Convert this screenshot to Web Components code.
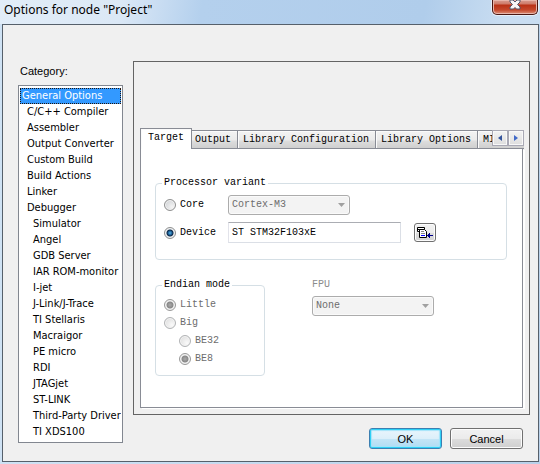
<!DOCTYPE html>
<html lang="en">
<head>
<meta charset="utf-8">
<title>Options for node "Project"</title>
<style>
html, body { margin: 0; min-height: 100vh; }
body { background: #bcd6ee; font: 11px/16px "DejaVu Sans Condensed", "DejaVu Sans", sans-serif; color: #000; }
</style>
</head>
<body>
<options-dialog></options-dialog>
<script>
const define = (name, html, setup) => customElements.define(name, class extends HTMLElement {
  connectedCallback() {
    if (this.shadowRoot) return;
    const t = document.createElement('template');
    t.innerHTML = '<style>*{box-sizing:border-box}</style>' + html;
    this.attachShadow({ mode: 'open' }).append(t.content.cloneNode(true));
    if (setup) setup(this, this.shadowRoot);
  }
});

define('title-bar', `
<style>
:host { display: flex; justify-content: space-between; align-items: flex-start; height: 24px; padding: 0 2px 0 4px; background: linear-gradient(100deg, #e2edf8 0, #dbe8f6 120px, #b4d0ed 200px, #b0cdeb 420px, #c9ddf1 500px); }
h1 { margin: 0; font: 12px/20px "Noto Sans", "Open Sans", sans-serif; }
button { width: 46px; height: 15px; padding: 0; border: 1px solid #4a1712; border-top: 0; border-radius: 0 0 5px 5px; background: linear-gradient(#d99d91 0, #cf7a68 4px, #b93116 5px, #c5482c 10px, #dc9179 14px); box-shadow: inset 0 0 0 1px #e8b5aa, 0 0 0 1px #e7eff8; display: grid; justify-items: center; align-items: start; }
svg { display: block; }
</style>
<h1><slot></slot></h1>
<button aria-label="Close"><svg width="12" height="10" viewBox="0 0 12 10"><path d="M1 0h3l2 2 2-2h3v2L8.500 4.500 11 7v2H7.500L6 7.500 4.500 9H1V7l2.500-2.500L1 2z" fill="#f7f7f7" stroke="#50566b"/></svg></button>`);

define('category-list', `
<style>
:host { display: block; }
ul { margin: 0; padding: 2px 1px; border: 1px solid #828790; background: #fff; list-style: none; }
</style>
<ul role="listbox" aria-label="Category"><slot></slot></ul>`);

define('category-item', `
<style>
:host { display: block; height: 16px; padding-left: 7px; line-height: 16px; white-space: nowrap; overflow: hidden; }
:host([level="0"]) { padding-left: 2px; }
:host([level="2"]) { padding-left: 13px; }
:host([selected]) { background: #3399ff; color: #fff; outline: 1px dotted #23140a; outline-offset: -1px; }
</style>
<slot></slot>`, host => { host.setAttribute('role', 'option'); host.setAttribute('aria-selected', host.hasAttribute('selected')); });

define('tab-strip', `
<style>
:host { display: flex; align-items: flex-end; height: 21px; position: relative; overflow: hidden; }
nav { position: absolute; right: 0; top: 2px; display: flex; background: #f0f0f0; }
nav button { width: 16px; height: 16px; padding: 0; border: 1px solid #a9a9b5; background: linear-gradient(#f3f3f3, #dedede); box-shadow: inset 0 0 0 1px #f8f8f8; display: grid; place-items: center; }
</style>
<slot></slot>
<nav>
<button aria-label="Scroll tabs left"><svg width="4" height="6"><path d="M4 0v6L0 3z" fill="#34549c"/></svg></button>
<button aria-label="Scroll tabs right"><svg width="4" height="6"><path d="M0 0v6l4-3z" fill="#4169c8"/></svg></button>
</nav>`);

define('tab-item', `
<style>
:host { display: block; flex: none; }
:host([active]) { margin-right: -2px; position: relative; z-index: 1; }
button { display: block; height: 19px; padding: 1px 6px 0 5px; border: 1px solid #898c95; border-left-width: 0; background: linear-gradient(#f3f3f3, #ebebeb 9px, #dddddd 10px, #cfcfcf); box-shadow: inset 1px 1px #fbfbfb; font: 10px/16px "Liberation Mono", monospace; color: #000; white-space: nowrap; }
:host([active]) button { height: 21px; padding: 0 7px 2px; border-left-width: 1px; border-bottom: 0; background: #fff; }
</style>
<button role="tab"><slot></slot></button>`, (h, r) => r.querySelector('button').setAttribute('aria-selected', h.hasAttribute('active')));

define('group-box', `
<style>
:host { display: block; }
fieldset { margin: 0; min-width: 0; border: 1px solid #d5dfe5; border-radius: 4px; padding: 5px 8px 8px; height: 100%; }
legend { padding: 0 2px; margin-left: -2px; line-height: 12px; }
</style>
<fieldset><legend></legend><slot></slot></fieldset>`, (h, r) => r.querySelector('legend').textContent = h.getAttribute('label'));

define('radio-option', `
<style>
:host { display: block; }
label { display: flex; align-items: center; gap: 4px; height: 18px; }
input { appearance: none; flex: none; margin: 0; width: 12px; height: 12px; border: 1px solid #8e8f8f; border-radius: 50%; background: radial-gradient(circle at 70% 70%, #f4f4f4, #c9ccd0); box-shadow: inset 0 0 0 1px #f4f4f4; }
input:checked { background: radial-gradient(circle, #59b8e8 0, #1a5a91 2px, #0b2644 3px, #e4e8ec 4px); }
input:disabled { border-color: #b1b3b5; background: radial-gradient(circle at 70% 70%, #fafafa, #d8d8d8); }
input:disabled:checked { border-color: #999; background: radial-gradient(circle, #aaa 0, #888 3px, #eee 4px); }
:host([disabled]) { color: #6d6d6d; }
</style>
<label><input type="radio"><span><slot></slot></span></label>`, (h, r) => {
  const i = r.querySelector('input');
  i.checked = h.hasAttribute('checked');
  i.disabled = h.hasAttribute('disabled');
});

define('combo-box', `
<style>
:host { display: grid; width: 122px; }
select { grid-area: 1 / 1; appearance: none; width: 100%; height: 20px; margin: 0; padding: 0 20px 0 3px; border: 1px solid #acacac; border-radius: 3px; background: #f3f3f3; box-shadow: inset 0 0 0 1px #fafafa; font: inherit; color: #6d6d6d; opacity: 1; }
svg { grid-area: 1 / 1; place-self: center end; margin-right: 5px; pointer-events: none; }
</style>
<select disabled><option></option></select>
<svg width="7" height="4"><path d="M0 0h7L3.500 4z" fill="#a0a0a0"/></svg>`, (h, r) => {
  r.querySelector('option').textContent = h.getAttribute('value');
  r.querySelector('select').setAttribute('aria-label', h.getAttribute('label'));
});

define('push-button', `
<style>
:host { display: block; width: 73px; }
button { width: 100%; height: 21px; padding: 0; border: 1px solid #707070; border-radius: 3px; background: linear-gradient(#f2f2f2, #ebebeb 50%, #dddddd 50%, #cfcfcf); box-shadow: inset 0 0 0 1px #fcfcfc; font: 11px/18px "Liberation Sans", Arial, sans-serif; color: #000; }
:host([default]) button { border-color: #3c7fb1; background: linear-gradient(#eaf5fc, #dceffa 50%, #c4e5f6 50%, #b0dcf3); box-shadow: inset 0 0 0 1px #2ed0f5, inset 0 0 1px 2px #a4e4fa; }
</style>
<button><slot></slot></button>`);

define('target-page', `
<style>
:host { display: block; flex: 1; padding: 28px 15px 31px 14px; border: 1px solid #898c95; border-top: 0; background: #fff; box-shadow: 2px 1px #fff; }
.variant { display: grid; grid-template-columns: 60px minmax(0, 173px) auto; column-gap: 4px; row-gap: 7px; align-items: center; padding: 1px 0 8px; }
.variant input { width: 100%; height: 21px; padding: 0 3px; border: 1px solid #dbdfe6; border-top-color: #abadb3; border-left-color: #e2e3ea; font: inherit; }
.variant button { width: 22px; height: 19px; margin-left: 9px; padding: 0; border: 1px solid #707070; border-radius: 3px; background: linear-gradient(#f2f2f2, #ebebeb 50%, #ddd 50%, #d4d4d4); box-shadow: inset 0 0 0 1px #fcfcfc; display: grid; place-items: center; }
.lower { display: flex; align-items: flex-start; gap: 47px; margin-top: 19px; }
.endian { width: 110px; height: 97px; }
.indent { margin-left: 15px; }
.fpu { display: grid; gap: 5px; color: #8c8c8c; line-height: 12px; }
</style>
<group-box label="Processor variant">
<div class="variant">
<radio-option>Core</radio-option><combo-box value="Cortex-M3" label="Core"></combo-box><span></span>
<radio-option checked>Device</radio-option><input type="text" value="ST STM32F103xE" aria-label="Device">
<button aria-label="Select device"><svg width="16" height="12" viewBox="0 0 16 12"><path d="M.5.500h7v2h-7zM.5 2v2.500H3" fill="#fff" stroke="#000"/><path d="M2.500 2.500h5l2 2v6h-7z" fill="#fff" stroke="#000"/><path d="M4 4h3v1H4zM4 6h4v1H4z" fill="#888"/><path d="M4 8h4v1H4z" fill="#00f"/><path d="M10 8h1V7h1V6h1v2h3v1h-3v2h-1v-1h-1V9h-1z" fill="#00008b"/></svg></button>
</div>
</group-box>
<div class="lower">
<group-box class="endian" label="Endian mode">
<radio-option checked disabled>Little</radio-option>
<radio-option disabled>Big</radio-option>
<radio-option class="indent" disabled>BE32</radio-option>
<radio-option class="indent" checked disabled>BE8</radio-option>
</group-box>
<div class="fpu"><span>FPU</span><combo-box value="None" label="FPU"></combo-box></div>
</div>`);

define('options-dialog', `
<style>
:host { display: flex; flex-direction: column; min-height: 100vh; background: linear-gradient(90deg, #cfe2f4, #b9d1ea); }
main { flex: 1; margin: 0 1px 2px 2px; border: 1px solid #56606b; background: #f0f0f0; padding: 36px 8px 12px 15px; display: grid; grid-template-columns: 105px minmax(0, 1fr); column-gap: 10px; align-items: start; }
h2 { margin: 0; padding: 2px 0 6px 2px; font: 11px/16px "Liberation Sans", Arial, sans-serif; }
.frame { min-height: 354px; display: flex; flex-direction: column; padding: 66px 6px 6px; border: 1px solid #646464; font: 10px/14px "Liberation Mono", monospace; }
tab-strip { margin-right: -1px; }
footer { display: flex; justify-content: flex-end; gap: 8px; padding: 13px 7px 0 0; }
</style>
<title-bar>Options for node "Project"</title-bar>
<main>
<section>
<h2>Category:</h2>
<category-list></category-list>
</section>
<section>
<div class="frame">
<tab-strip role="tablist"><tab-item active>Target</tab-item><tab-item>Output</tab-item><tab-item>Library Configuration</tab-item><tab-item>Library Options</tab-item><tab-item>MISRA-C:2004</tab-item></tab-strip>
<target-page></target-page>
</div>
<footer><push-button default>OK</push-button><push-button>Cancel</push-button></footer>
</section>
</main>`, (h, r) => {
  const groups = [['General Options'], ['C/C++ Compiler', 'Assembler', 'Output Converter', 'Custom Build', 'Build Actions', 'Linker', 'Debugger'],
    ['Simulator', 'Angel', 'GDB Server', 'IAR ROM-monitor', 'I-jet', 'J-Link/J-Trace', 'TI Stellaris', 'Macraigor', 'PE micro', 'RDI', 'JTAGjet', 'ST-LINK', 'Third-Party Driver', 'TI XDS100']];
  const list = r.querySelector('category-list');
  groups.forEach((names, level) => names.forEach(name => {
    const item = document.createElement('category-item');
    item.setAttribute('level', level);
    if (level === 0) item.setAttribute('selected', '');
    item.textContent = name;
    list.append(item);
  }));
});
</script>
</body>
</html>
